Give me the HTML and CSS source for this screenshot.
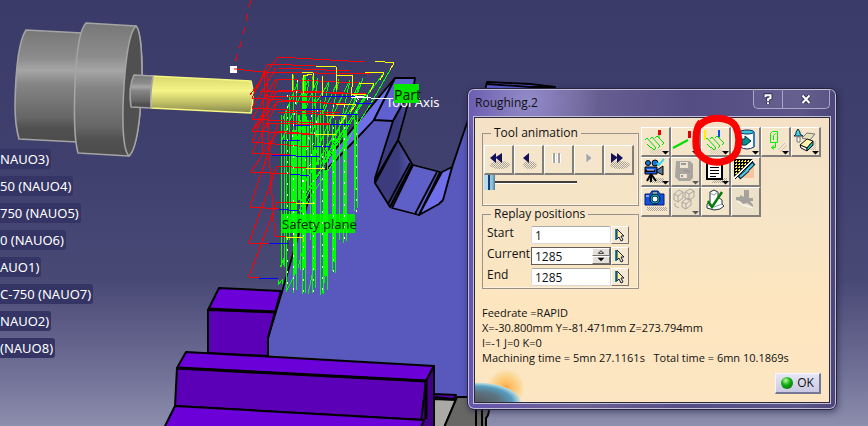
FILE: index.html
```html
<!DOCTYPE html>
<html lang="en">
<head>
<meta charset="utf-8">
<title>Roughing.2</title>
<link rel="stylesheet" href="styles.css">
</head>
<body>
<main class="viewport">
  <svg class="scene" viewBox="0 0 868 426" preserveAspectRatio="xMinYMin slice" aria-hidden="true">
    <defs>
      <linearGradient id="steel" x1="0" y1="0" x2="0" y2="1">
        <stop offset="0" stop-color="#777"/><stop offset=".25" stop-color="#8c8c8c"/><stop offset=".36" stop-color="#a6a6a6"/><stop offset=".48" stop-color="#858585"/><stop offset=".78" stop-color="#666"/><stop offset=".88" stop-color="#505050"/><stop offset="1" stop-color="#4c4c4c"/>
      </linearGradient>
      <linearGradient id="brass" x1="0" y1="0" x2="0" y2="1">
        <stop offset="0" stop-color="#d8d86c"/><stop offset=".4" stop-color="#f4f487"/><stop offset=".7" stop-color="#c4c468"/><stop offset="1" stop-color="#86864a"/>
      </linearGradient>
      <linearGradient id="wall" x1="0" y1="0" x2="1" y2="0">
        <stop offset="0" stop-color="#3b3b7e"/><stop offset=".6" stop-color="#3b3b7e"/><stop offset="1" stop-color="#5a5ab8"/>
      </linearGradient>
    </defs>

    <!-- tool holder -->
    <g stroke="#a4a4a4" stroke-width="1.6" stroke-linejoin="round">
      <path fill="url(#steel)" d="M26 30 L82 33 L78 142 L19 139 Q15 125 15 105 Q16 45 26 30Z"/>
      <path fill="url(#steel)" d="M86 23 L136 26 Q142 35 142 75 Q140 145 129 156 L78 153 Q73 135 75 85 Q77 32 86 23Z"/>
      <path fill="#505050" d="M136 26 Q142 32 142 76 Q140 146 129 156 Q122 150 123 105 Q126 35 136 26Z"/>
      <path fill="url(#brass)" stroke="#f6f683" d="M151 76 L251 81 Q255 94 251 113 L151 108Z"/>
      <path fill="url(#steel)" d="M134 75 L153 76 Q150 92 151 108 L131 107 Q128 87 134 75Z"/>
    </g>

    <!-- workpiece -->
    <g stroke="#000" stroke-width="1.8" stroke-linejoin="round">
      <path fill="#5959bd" stroke="none" d="M395 78 L415 78 L398 140 L375 180 L392 208 L418 215 L443 200 L468 120 L476 110 L476 397 L434 395 L434 366 L268 355 L268 338 L282 292 L295 247 L313 184 L328 158Z"/>
      <path fill="#6f6feb" d="M395 78 L328 158 L326 170 L360 135 L374 120Z"/>
      <path fill="#6060d0" d="M395 78 L415 78 L414 85 L393 121 L374 120Z"/>
      <path fill="url(#wall)" d="M413 85 L407 107 L398 140 L412 164 L390 207 L375 183 L375 178 L393 121Z"/>
      <path fill="#5f5fc8" d="M413 165 L440 172 L419 215 L392 208Z"/>
      <path fill="#6f6feb" d="M442 172 L452 167 L443 200 L439 204 L419 215Z"/>
      <path fill="none" d="M398 140 L375 183 M395 145 L376 178 M410 163 L388 204 M437 172 L415 214 M452 167 L468 120 M328 158 L313 184 L295 247 L282 292 L268 338 V355"/>
      <path fill="#5a5acb" d="M485 90 L487 82 L530 84 L555 87 L554 94Z"/>
      <path fill="none" d="M487 84 L530 87 L555 87"/>
    </g>

    <!-- fixture -->
    <g stroke="#000" stroke-width="2" stroke-linejoin="round">
      <path fill="#6b00d8" d="M219 288 L281 291 L275 312 L208 310Z"/>
      <path fill="#5c00b8" d="M208 310 L275 312 L268 338 V356 L208 353Z"/>
      <path fill="#a9aaa6" d="M434 399 L456 400 L443 430 L434 430Z"/>
      <path fill="#676766" d="M457 397 H484 V409 H489 Q489 415 486 418 V430 H443Z"/>
      <path fill="#5c00b8" d="M434 394 L456 395 L454 399 L434 397Z"/>
      <path d="M476 405 V426 M482 405 V426"/>
      <path fill="#6b00d8" d="M186 352 L434 366 L426 381 L177 368Z"/>
      <path fill="#5c00b8" d="M177 368 L426 381 L424 420 L175 406Z"/>
      <path fill="#430086" d="M426 381 L434 366 V430 H420Z"/>
      <path fill="#6b00d8" d="M175 406 L424 420 L420 430 L163 430Z"/>
    </g>
    <path d="M275 312 L208 309 M177 368 L426 381 V419" fill="none" stroke="#000" stroke-width="3"/>

    <rect x="282" y="214" width="73" height="19" fill="#00e600"/>

    <!-- cutter path -->
    <g fill="none" stroke-width="1" shape-rendering="crispEdges">
      <path stroke="#00ff00" d="M281 115 V267 M284 117 V267 M286 110 V292 M289 95 V240 M293 75 V293 M296 110 V290 M300 120 V270 M302 78 V294 M305 85 V293 M310 120 V240 M312 76 V293 M315 90 V288 M320 100 V295 M323 105 V294 M327 110 V290 M332 125 V271 M335 120 V273 M339 120 V240 M343 115 V243 M346 115 V241 M354 115 V211 M357 110 V208"/>
      <path stroke="#00ff00" stroke-width="3" d="M295 130 V274 M304 76 V268 M314 150 V270 M325 170 V276 M334 145 V262 M344 130 V225"/>
      <path stroke="#00ff00" stroke-width="2" d="M299 115 V200 M308 120 V190 M292 140 V220 M355 120 V190 M318 120 V165"/>
      <path stroke="#00ff00" d="M394 63 L370 105 L335 160 L300 213 M384 73 L360 105 L320 165 M374 84 L340 140 L300 202 M366 94 L330 153 L299 211 M354 104 L300 190 M346 116 L303 185 M283 119 L298 82 L296 105 L309 79 L305 110 L318 78 L314 106 L329 82 L322 115 L339 79 L331 119 L350 80 L341 122 L360 82 L350 115 L363 78 M282 140 L294 110 L292 150 L307 116 L303 155 L319 115 L313 160 L331 117 L324 165 L344 116 M280 267 L285 256 L283 265 M278 280 V285 L282 280 V284 M286 292 L296 272 M298 268 L304 245 M308 294 L314 266 M322 293 L328 262"/>
      <path stroke="#f00" d="M278 57 L365 62 M250 95 L278 57 M268 64 L315 66 M268 64 L252 98 M234 69 L263 72 L370 74 M278 68 L350 71 M265 71 L262 155 M268 71 L267 129 M278 79 L359 83 M278 79 L252 142 M252 98 L355 105 M278 90 L366 94 L259 91 M266 96 L352 97 M252 108 L340 113 M278 101 L345 104 M278 101 L252 131 M252 119 L330 124 M278 112 L335 115 M264 123 L331 125 M252 131 L318 135 M278 131 L320 135 M278 131 L251 172 M252 142 L310 147 M252 153 L290 155 M251 172 L290 174 M277 166 L306 168 M277 166 L249 243 M250 207 L279 209 M250 207 L278 124 M277 202 L296 203 M277 202 L249 277 M249 243 L269 243 M249 277 L259 278 M275 236 L286 237 M275 236 L268 140 L268 124 M252 98 L266 71 M252 108 L276 68 M252 119 L276 79 M252 131 L277 91 M252 153 L278 101"/>
      <path stroke="#ff0" d="M375 61 L394 63 L390 70 M316 66 L336 67 V90 M365 72 L384 73 L380 80 M336 75 L353 76 L351 98 M359 83 L374 84 L370 92 M351 94 L366 95 M293 74 L292 91 M302 72 L313 73 V88 M322 76 V96 M312 74 L303 76 V94 M336 104 L356 105 L350 112 M326 115 L346 116 L340 124 M315 134 L336 135 M306 168 L325 169 M296 203 L315 204 M286 237 L303 238 V242"/>
      <path stroke="#00f" d="M320 96 L356 97 M355 103 L372 104 M302 109 L324 110 M340 114 L358 115 M330 124 L350 125 M292 125 L310 126 M283 140 L300 141 M314 146 L330 147 M272 155 L319 157 M290 174 L309 176 M279 209 L299 211 M269 243 L289 244 M259 278 L278 278"/>
      <path stroke="#fff" d="M352 97 L390 99 M359 100 L355 96 L364 97 M367 100 V95"/>
      <path stroke="#fff" stroke-dasharray="2 9" d="M287 95 V293 M298 80 L292 138 M312 115 L301 190 M333 105 V273 M344 105 V244 M356 100 V212 M318 110 L309 172 M322 145 V296 M303 180 V294 M313 180 V294 M293 145 V294"/>
      <path stroke="#f00" stroke-dasharray="7 7" d="M251 0 L242 40 L234 66"/>
    </g>
    <text class="tag" x="282" y="229">Safety plane</text>
    <rect x="230" y="66" width="7" height="7" fill="#fff"/>
    <path d="M234 69 H237" stroke="#f00"/>
    <text class="axis" x="386" y="107">Tool Axis</text>
    <rect x="394" y="84" width="25" height="19" fill="#00e600"/>
    <text class="tag part" x="394" y="100">Part</text>
  </svg>

  <ul class="tree">
    <li>NAUO3)</li>
    <li>50 (NAUO4)</li>
    <li>750 (NAUO5)</li>
    <li>0 (NAUO6)</li>
    <li>AUO1)</li>
    <li>C-750 (NAUO7)</li>
    <li>NAUO2)</li>
    <li>(NAUO8)</li>
  </ul>

  <section class="dialog" role="dialog" aria-labelledby="dialog-title">
    <header class="titlebar">
      <h1 id="dialog-title">Roughing.2</h1>
      <div class="caption">
        <button type="button" aria-label="Help"><svg viewBox="0 0 12 12"><path d="M3.5 4 V2.3 H8.5 V5 L6 6.2 V8 M6 9.3 V11" class="halo"/><path d="M3.5 4 V2.3 H8.5 V5 L6 6.2 V8 M6 9.3 V11"/></svg></button>
        <button type="button" aria-label="Close"><svg viewBox="0 0 12 12"><path d="M2.5 2.5 L9.5 10 M9.5 2.5 L2.5 10" class="halo"/><path d="M2.5 2.5 L9.5 10 M9.5 2.5 L2.5 10"/></svg></button>
      </div>
    </header>

    <div class="client">
      <svg class="defs" width="0" height="0" aria-hidden="true">
        <defs>
          <pattern id="dither" width="2" height="2" patternUnits="userSpaceOnUse"><path d="M0 0h1v1H0zM1 1h1v1H1z" fill="#aaa69c"/></pattern>
          <pattern id="mesh" width="3" height="3" patternUnits="userSpaceOnUse"><path d="M0 0h3v3H0z"/><path d="M0 0h2v1H0zM1 2h1v1H1z" fill="#fe3"/></pattern>
          <symbol id="more" viewBox="0 0 27 27"><path d="M20 23H27L23.500 26.500Z"/></symbol>
          <symbol id="zigzag" viewBox="0 0 27 27"><path d="M3 12 L5 10 L14 20 L12 22 L9 19 M8 11 L10 9 L18 18 L16 20 M13 10 L15 8 L22 15 L20 17 M17 10 V6 M5 16 L9 20" fill="none" stroke="#0d0"/></symbol>
          <symbol id="pick" viewBox="0 0 16 16"><path d="M3 2H5V13H3Z" fill="#198d93"/><path d="M5 2 L12 9 H9 L11 13 L9 14 L7 10 L5 12Z" fill="#ffef9d" stroke="#171c50"/></symbol>
        </defs>
      </svg>

      <div class="controls">
        <div class="left">
          <fieldset>
            <legend>Tool animation</legend>
            <div class="transport">
              <button type="button" class="tool" aria-label="Rewind"><svg viewBox="0 0 27 27"><ellipse cx="15" cy="19" rx="10" ry="4" fill="url(#dither)"/><path d="M5 12L11 7V11L17 7V17L11 12V17Z" fill="#15105a"/></svg></button>
              <button type="button" class="tool" aria-label="Step back"><svg viewBox="0 0 27 27"><ellipse cx="15" cy="19" rx="7" ry="4" fill="url(#dither)"/><path d="M8 12L14 7V17Z" fill="#15105a"/></svg></button>
              <button type="button" class="tool" aria-label="Pause"><svg viewBox="0 0 27 27"><path d="M9 8V17M14 8V17" stroke="#fff" stroke-width="4"/><path d="M9 7V17M14 7V17" stroke="#a5a5a5" stroke-width="2"/></svg></button>
              <button type="button" class="tool" aria-label="Play"><svg viewBox="0 0 27 27"><path d="M11 7L17 12L11 17Z" fill="#a5a5a5" stroke="#fff" stroke-width=".5"/></svg></button>
              <button type="button" class="tool" aria-label="Fast forward"><svg viewBox="0 0 27 27"><ellipse cx="15" cy="19" rx="10" ry="4" fill="url(#dither)"/><path d="M6 7L12 11V7L18 12L12 17V12L6 17Z" fill="#15105a"/></svg></button>
            </div>
            <input class="slider" type="range" min="0" max="100" value="0" aria-label="Position">
          </fieldset>

          <fieldset>
            <legend>Replay positions</legend>
            <div class="positions">
              <label for="start">Start</label><input id="start" type="text" value="1"><button type="button" aria-label="Pick start"><svg viewBox="0 0 16 16"><use href="#pick"/></svg></button>
              <label for="current">Current</label>
              <div class="spinner"><input id="current" type="text" value="1285"><button type="button" aria-label="Increase"><svg viewBox="0 0 16 7"><path d="M5 5L8 2L11 5Z" fill="#fff" stroke="#000"/></svg></button><button type="button" aria-label="Decrease"><svg viewBox="0 0 16 7"><path d="M4 1H12L8 5Z"/></svg></button></div>
              <button type="button" aria-label="Pick current"><svg viewBox="0 0 16 16"><use href="#pick"/></svg></button>
              <label for="end">End</label><input id="end" type="text" value="1285"><button type="button" aria-label="Pick end"><svg viewBox="0 0 16 16"><use href="#pick"/></svg></button>
            </div>
          </fieldset>
        </div>

        <div class="toolbox">
          <button type="button" class="tool" aria-label="Full path"><svg viewBox="0 0 27 27"><path d="M8 21H20V26H8Z" fill="url(#dither)" opacity=".4"/><use href="#zigzag"/><path d="M16 2H19V7H16Z" fill="#e00"/><use href="#more"/></svg></button>
          <button type="button" class="tool" aria-label="Segment"><svg viewBox="0 0 27 27"><path d="M1 20L16 12" stroke="#0d0" stroke-width="2"/><path d="M16 3H19V10H16Z" fill="#d00"/><use href="#more"/></svg></button>
          <button type="button" class="tool" aria-label="Colored path"><svg viewBox="0 0 27 27"><path d="M8 21H20V26H8Z" fill="url(#dither)" opacity=".4"/><use href="#zigzag"/><path d="M2 2H4V12H2Z" fill="#fe0"/><path d="M16 2H18V9H16Z" fill="#0050f0"/><use href="#more"/></svg></button>
          <button type="button" class="tool" aria-label="Material"><svg viewBox="0 0 27 27"><path d="M8 4V19Q15 23 22 19V4Z" fill="#fff" stroke="#17276a"/><ellipse cx="15" cy="4" rx="7" ry="2" fill="#35cbd4" stroke="#17276a"/><path d="M10 11H13V8L19 13L14 17H10Z" fill="#088b91" stroke="#003640"/><path d="M22 4V19" stroke="#2e7be0" stroke-width="2"/><use href="#more"/></svg></button>
          <button type="button" class="tool" aria-label="Tool swap"><svg viewBox="0 0 27 27"><path d="M16 22L23 15M18 24L25 17" stroke="#c9c0b0"/><path d="M8.500 14.500V5.500L10.500 3.500H15.500V14.500H8.500M11.500 12V7.500L13.500 5.500M13.500 15V19.500H9.500M12 17.500L9.500 19.500L12 21.500" fill="none" stroke="#0e0"/><use href="#more"/></svg></button>
          <button type="button" class="tool" aria-label="Machined stock"><svg viewBox="0 0 27 27"><path d="M14 22L24 12V22Z" fill="url(#dither)" opacity=".6"/><path d="M2 8L4 6V4L6 1L8 4V6L11 8Z" fill="#43d5df" stroke="#124"/><path d="M5 9H8V14H5Z" fill="#fff" stroke="#777"/><path d="M10 10L15 5L23 6L18 12Z" fill="#e3dfb9" stroke="#777"/><path d="M8 17L15 11L21 13L15 20Z" fill="#fff6aa" stroke="#111"/><path d="M8 17L15 20V23L9 20Z" fill="#fff" stroke="#111"/><path d="M15 20L21 13V17L15 23Z" fill="#14bdca" stroke="#111"/><use href="#more"/></svg></button>

          <button type="button" class="tool" aria-label="Video"><svg viewBox="0 0 27 27"><path d="M7 20H22V25H7Z" fill="url(#dither)"/><path d="M3 9H15V16H3Z" fill="#175be0" stroke="#000"/><circle cx="6" cy="5" r="2.500" fill="#17d" stroke="#000"/><circle cx="13" cy="5" r="3" fill="#17d" stroke="#000"/><path d="M15 12L21 8V17L15 14Z" fill="#579" stroke="#000"/><path d="M9 16L5 23M9 16V24M9 16L14 23M3 13H13" stroke="#000" stroke-width="2"/><path d="M15 5L17 7L22 1" fill="none" stroke="#3bd7ed" stroke-width="2"/><path d="M5 12H12" stroke="#eee"/><use href="#more"/></svg></button>
          <button type="button" class="tool off" aria-label="Save video"><svg viewBox="0 0 27 27"><path d="M4 3H18L21 6V20L18 23H7L3 19Z" fill="#aaa69f"/><path d="M8 4H16V10H8ZM8 16H15V20H8Z" fill="#eee4d1"/><path d="M9 6H14M12 12L18 14M9 18H11" stroke="#999" stroke-width="2"/><use href="#more" opacity=".6"/></svg></button>
          <button type="button" class="tool" aria-label="Report"><svg viewBox="0 0 27 27"><path d="M18 20H25V25H9L14 21Z" fill="url(#dither)"/><path d="M5 5H20V21H5Z" fill="#fff" stroke="#000" stroke-width="2"/><path d="M5 4H9" stroke="#f00" stroke-width="2"/><path d="M8 9.500H17M8 12.500H17M8 15.500H17M8 18.500H14" stroke="#000"/><use href="#more"/></svg></button>
          <button type="button" class="tool" aria-label="Analysis"><svg viewBox="0 0 27 27"><path d="M2 1H21L2 19Z" fill="url(#mesh)"/><path d="M3 22L22 3V20H3Z" fill="#f6c49e"/><path d="M2 21L21 2" stroke="#fff" stroke-width="2"/><path d="M3 21L21 3" stroke="#111"/><path d="M14 13L22 5M7 20L16 12" stroke="#124" stroke-width="4"/><path d="M14 13L21 6M8 19L16 12" stroke="#48d7dd" stroke-width="2"/></svg></button>
          <span></span><span></span>

          <button type="button" class="tool" aria-label="Photo"><svg viewBox="0 0 27 27"><path d="M5 19H25V23H5Z" fill="url(#dither)"/><path d="M3 6H8L10 3H16L18 6H22V17H3Z" fill="#1450e6" stroke="#001a62"/><circle cx="13" cy="11" r="5" fill="#0bb" stroke="#000"/><circle cx="13" cy="11" r="3" fill="#fff" stroke="#026"/><path d="M4 8H7" stroke="#fff"/><path d="M11 5H15" stroke="#ff4"/></svg></button>
          <button type="button" class="tool off" aria-label="Compare"><svg viewBox="0 0 27 27"><path d="M2 6L7 2L11 4V10L6 14L2 12ZM2 6L6 8V14M6 8L11 4M13 4L18 1L22 3V9L17 12L13 10ZM13 4L17 6V12M17 6L22 3M10 14L15 10L19 12V17L14 21L10 19ZM10 14L14 16V21M14 16L19 12M3 15V18L7 20" fill="none" stroke="#aaa69f"/><use href="#more" opacity=".6"/></svg></button>
          <button type="button" class="tool" aria-label="Validate"><svg viewBox="0 0 27 27"><path d="M8 4L12 2L16 4V9L20 12V16L22 18L18 21L12 22L5 20V16L8 14V9Z" fill="#fff" stroke="#234"/><path d="M8 5L12 7L16 4M6 17L12 19L20 16" fill="none" stroke="#89a"/><path d="M6 13L10 19L20 4" fill="none" stroke="#087a0b" stroke-width="2.500"/></svg></button>
          <button type="button" class="tool off" aria-label="Collision"><svg viewBox="0 0 27 27"><path d="M5 13L11 17L21 20" fill="none" stroke="#fff"/><path d="M12 2H17V10H21V13H18L21 17V19L15 15L11 16L8 13L4 12V9H8V7L12 9Z" fill="#a5a29d"/></svg></button>
        </div>
      </div>

      <div class="readout">
        <p>Feedrate =RAPID</p>
        <p>X=-30.800mm Y=-81.471mm Z=273.794mm</p>
        <p>I=-1 J=0 K=0</p>
        <p>Machining time = 5mn 27.1161s &nbsp; Total time = 6mn 10.1869s</p>
      </div>
      <footer><button type="button" class="ok"><span class="led"></span>OK</button></footer>
      <div class="planet" aria-hidden="true"></div>
    </div>

    <svg class="marker" viewBox="0 0 58 56" aria-hidden="true"><path d="M13 9 Q8 15 8 25 Q7 37 12 42 Q21 51 33 49 Q45 47 49 38 Q53 25 48 14 Q45 8 36 6 Q20 3 11 13" fill="none" stroke="#fe0000" stroke-width="7" stroke-linejoin="round"/></svg>
  </section>
</main>
</body>
</html>
```
FILE: styles.css
```css
* { box-sizing: border-box; }

body {
  margin: 0;
  color: #111;
  font: 12px/14px "Open Sans", "Noto Sans", sans-serif;
}

button, input { font: inherit; color: inherit; }
button { margin: 0; padding: 0; }
svg { display: block; }

.viewport {
  position: relative;
  min-height: 100vh;
  overflow: hidden;
  background: linear-gradient(#3b3b69, #40406e 38%, #494976 66%, #6b6b93 85%, #8d8dad);
}

.scene {
  position: absolute;
  inset: 0;
  width: 100%;
  height: 100%;
}
.tag, .axis { font: 13px "Noto Sans", sans-serif; fill: #063006; }
.tag.part { font-size: 14px; fill: #002000; }
.axis { fill: #fff; }

.tree {
  position: relative;
  display: flex;
  flex-direction: column;
  align-items: flex-start;
  gap: 7px;
  margin: 0;
  padding: 149px 0 0;
  list-style: none;
}
.tree li {
  padding: 0 2px 0 0;
  border-radius: 0 3px 3px 0;
  background: #343465;
  color: #fff;
  font: 13px/20px "Noto Sans", sans-serif;
}

.dialog {
  position: absolute;
  left: 467px;
  top: 88px;
  width: 370px;
  padding: 0 6px 6px;
  border: 1px solid #26243f;
  border-radius: 7px;
  background:
    radial-gradient(ellipse at 60px 12px, #a7a0dcb0, transparent 70px),
    linear-gradient(90deg, #6456ae, #6b6294 30%, #544d84 60%, #5b5588 90%, #4d4779);
  box-shadow: inset 0 0 0 1px #c3bedc, 1px 2px 6px #15153780;
}

.titlebar {
  display: flex;
  justify-content: space-between;
  height: 28px;
}
.titlebar h1 {
  margin: 0;
  padding-left: 1px;
  font-size: 12px;
  font-weight: 400;
  line-height: 28px;
}
.caption {
  display: flex;
  height: 20px;
  border: 1px solid #aaa5c8;
  border-top: 0;
  border-radius: 0 0 5px 5px;
}
.caption button {
  display: grid;
  place-items: center;
  width: 28px;
  border: 0;
  background: #ffffff10;
}
.caption button + button { width: 47px; border-left: 1px solid #aaa5c8; }
.caption svg { width: 12px; height: 12px; }
.caption path { fill: none; stroke: #fff; stroke-width: 2; }
.caption .halo { stroke: #33305a; stroke-width: 4; }

.client {
  position: relative;
  padding: 8px 8px 8px 7px;
  border: 1px solid #2b2838;
  box-shadow: 0 0 0 1px #c3bedc;
  background: linear-gradient(#f4e1c6, #f7e5c7 35%, #fde6bf 65%, #fce5c2);
}
.defs { position: absolute; }
.controls { display: flex; gap: 2px; }
.left { flex: 0 0 157px; }

fieldset {
  min-width: 0;
  margin: 0;
  padding: 5px 1px 15px;
  border: 1px solid #97928b;
  box-shadow: inset -1px -1px #fff8;
}
fieldset + fieldset { margin-top: 1px; padding-bottom: 2px; }
legend { margin-left: 7px; padding: 0 3px; }

.tool {
  width: 30px;
  height: 30px;
  border: solid;
  border-width: 1px 2px 2px 1px;
  border-color: #fff #827e79 #827e79 #fff;
  background: #f5e6cb;
}
.tool svg { width: 27px; height: 27px; }
.transport { display: flex; }

.slider {
  display: block;
  width: 93px;
  height: 15px;
  margin: 0;
  appearance: none;
  background: linear-gradient(#403d3a 0 2px, #fff 2px) 0 6px / 100% 3px no-repeat;
}
.slider::-webkit-slider-thumb {
  appearance: none;
  width: 11px;
  height: 15px;
  background: linear-gradient(90deg, #b8dcf0 0 4px, #143e70 4px 6px, #94c4dc 6px 8px, #4b7f9a);
}

.positions {
  display: grid;
  grid-template-columns: 44px 1fr 18px;
  gap: 3px 0;
  padding: 0 8px 0 3px;
}
.positions input {
  width: 100%;
  min-width: 0;
  height: 18px;
  padding: 0 3px;
  border: 1px solid #ddd8d2;
  border-top-color: #aaa;
  border-radius: 2px;
  background: #fff;
}
.positions button {
  border: 1px solid;
  border-color: #fff #77736d #77736d #fff;
  background: #f6e9d2;
}
.positions > button { height: 18px; }
.positions svg { width: 16px; height: 16px; }
.positions .spinner {
  display: grid;
  grid-template: 1fr 1fr / 1fr 18px;
  height: 18px;
  border: 1px solid #625e5a;
  background: #fff;
}
.spinner input { grid-row: 1 / 3; height: 16px; border: 0; }
.spinner button { background: #e3dfda; }
.spinner svg { width: 16px; height: 6px; }

.toolbox {
  display: grid;
  grid-template-columns: repeat(6, 30px);
  grid-auto-rows: 30px;
  align-content: start;
  padding-top: 1px;
}
.off { background: #ede0c9; }

.readout { margin-top: 16px; font-size: 11px; line-height: 15px; }
.readout p { margin: 0; }

footer { display: flex; justify-content: flex-end; margin-top: 8px; }
.ok {
  display: flex;
  align-items: center;
  justify-content: center;
  gap: 4px;
  width: 46px;
  height: 21px;
  border: solid;
  border-width: 1px 2px 2px 1px;
  border-color: #f4f3ff #777795 #777795 #f4f3ff;
  background: linear-gradient(#e7e6f4, #c9c9e3);
}
.led {
  width: 12px;
  height: 12px;
  border-radius: 50%;
  background: radial-gradient(circle at 40% 30%, #b9ff9c, #13ad12 40%, #065f08);
}

.planet {
  position: absolute;
  left: 0;
  bottom: 0;
  width: 50px;
  height: 34px;
  background:
    radial-gradient(ellipse 44px 20px at 3px 34px, #555a60 0, #5c7480 50%, #559cc0 78%, #b7d9dd 94%, transparent 98%),
    radial-gradient(circle at 31px 20px, #ff9d36 0, #ffbd60 5px, #fbd38a 12px, transparent 19px);
}

.marker {
  position: absolute;
  left: 220px;
  top: 24px;
  width: 58px;
  height: 56px;
}
```
